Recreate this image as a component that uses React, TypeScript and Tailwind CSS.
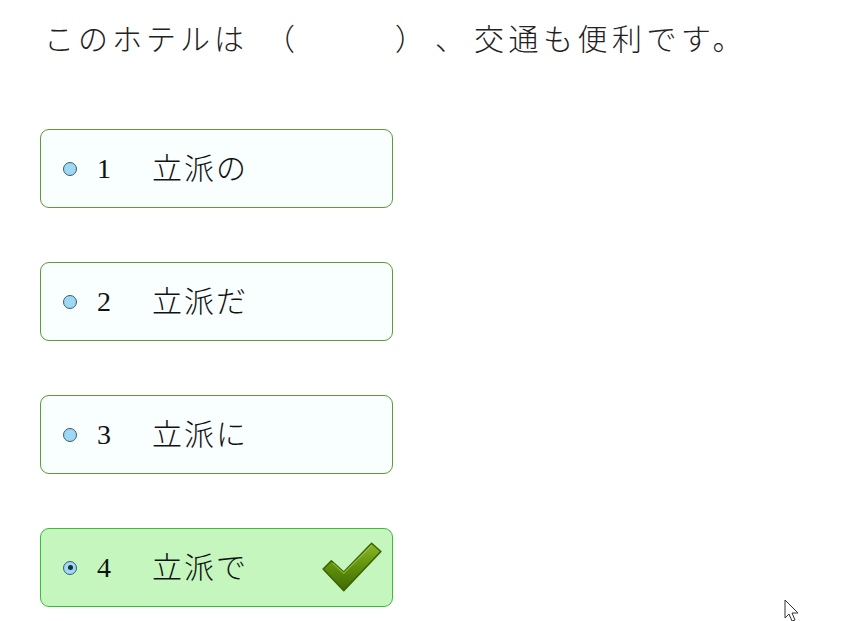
import React from "react";

const options = [
  { n: "1", t: "立派の", correct: false },
  { n: "2", t: "立派だ", correct: false },
  { n: "3", t: "立派に", correct: false },
  { n: "4", t: "立派で", correct: true },
];

function Check() {
  return (
    <svg width="64" height="56" viewBox="0 0 62 54" className="absolute right-[8px] top-[10px]">
      <defs>
        <linearGradient id="cg" x1="0" y1="0" x2="0" y2="1">
          <stop offset="0" stopColor="#8cb82a" />
          <stop offset="0.5" stopColor="#5f900c" />
          <stop offset="1" stopColor="#3f6a02" />
        </linearGradient>
      </defs>
      <path
        d="M3 29 L11 21 L23 32 L50 4 L59 12 L23 50 Z"
        fill="url(#cg)"
        stroke="#3a6300"
        strokeWidth="1.5"
        strokeLinejoin="round"
      />
      <path d="M12 23 L23 33 L50 6" fill="none" stroke="#a8d04a" strokeWidth="1.2" opacity="0.7" />
    </svg>
  );
}

export default function App() {
  return (
    <div className="w-[851px] h-[621px] bg-white relative overflow-hidden">
      <div
        className="absolute left-[44px] top-[14px] flex items-center text-[30px] leading-[46px] text-[#222] whitespace-nowrap"
        style={{ fontFamily: '"Noto Sans CJK JP", sans-serif', fontWeight: 300 }}
      >
        <span className="inline-block w-[221px] tracking-[4px]">このホテルは</span>
        <span className="inline-block w-[130px]">（</span>
        <span className="inline-block w-[40px]">）</span>
        <span className="inline-block w-[39px]">、</span>
        <span className="tracking-[4.5px]">交通も便利です。</span>
      </div>

      <div className="pt-[129px] pl-[40px] flex flex-col gap-[54px]">
        {options.map((o) => (
          <div
            key={o.n}
            className={
              o.correct
                ? "relative w-[353px] h-[79px] rounded-[9px] border-[1.5px] border-[#3cbb38] bg-[#c4f6be] flex items-center"
                : "relative w-[353px] h-[79px] rounded-[9px] border-[1.5px] border-[#5e9a36] bg-[#f9fefe] flex items-center"
            }
          >
            <div className="ml-[22px] w-[14px] h-[14px] rounded-full border-[1.5px] border-[#3f5b6e] bg-[#9dd8f4] flex items-center justify-center">
              {o.correct && <div className="w-[5px] h-[5px] rounded-full bg-[#1f2a33]" />}
            </div>
            <span
              className="ml-[20px] w-[55px] text-[28px] text-[#111]"
              style={{ fontFamily: '"Liberation Serif", serif' }}
            >
              {o.n}
            </span>
            <span
              className="text-[30px] tracking-[2px] text-[#111]"
              style={{ fontFamily: '"Liberation Serif", "Noto Sans CJK JP", serif', fontWeight: 300 }}
            >
              {o.t}
            </span>
            {o.correct && <Check />}
          </div>
        ))}
      </div>

      <svg width="16" height="24" viewBox="0 0 16 24" className="absolute left-[784px] top-[599px]">
        <path d="M1 1 L1 19 L5 15 L8 22 L11 21 L8 14 L14 14 Z" fill="#fff" stroke="#333" strokeWidth="1" />
      </svg>
    </div>
  );
}
